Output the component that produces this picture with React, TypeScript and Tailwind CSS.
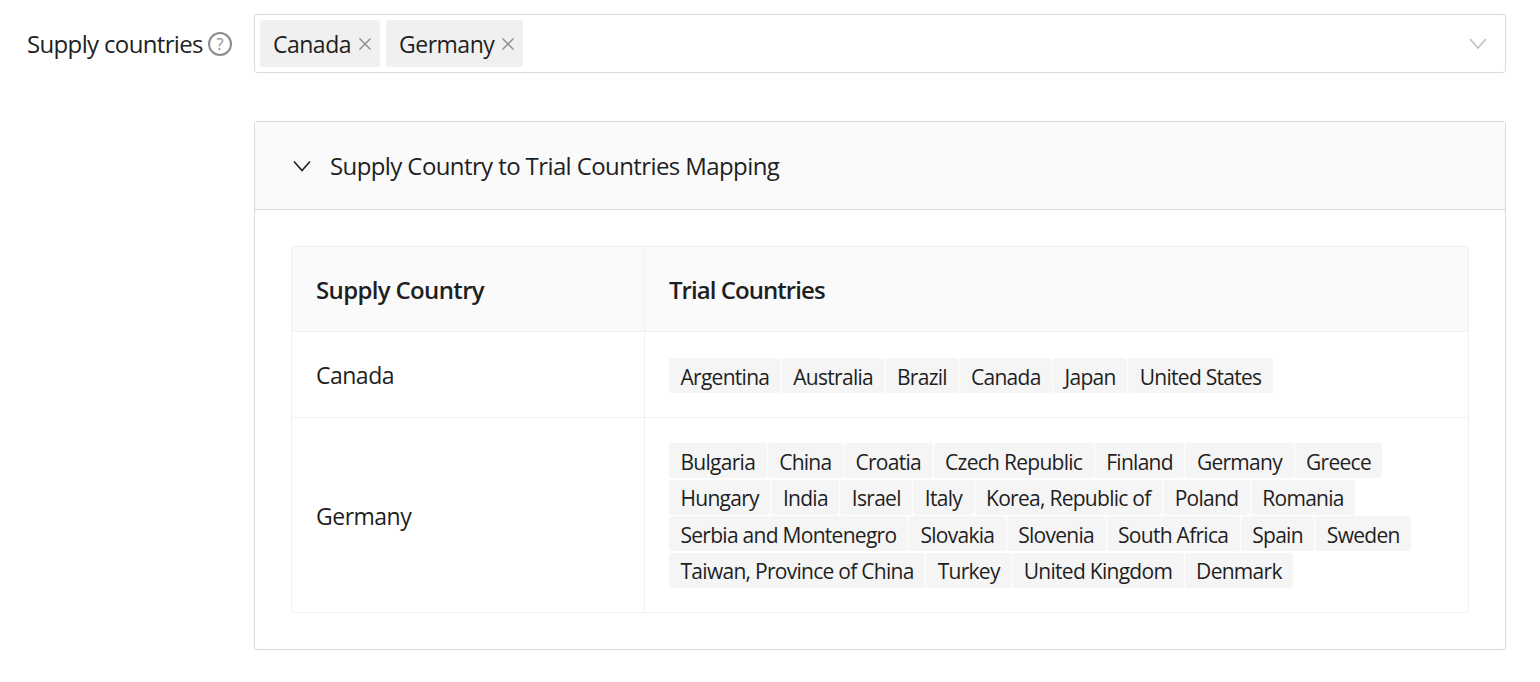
const font = "font-['Open_Sans','Noto_Sans',sans-serif]";

const mapping = [
  {
    supply: "Canada",
    trial: ["Argentina", "Australia", "Brazil", "Canada", "Japan", "United States"],
  },
  {
    supply: "Germany",
    trial: [
      "Bulgaria", "China", "Croatia", "Czech Republic", "Finland", "Germany", "Greece",
      "Hungary", "India", "Israel", "Italy", "Korea, Republic of", "Poland", "Romania",
      "Serbia and Montenegro", "Slovakia", "Slovenia", "South Africa", "Spain", "Sweden",
      "Taiwan, Province of China", "Turkey", "United Kingdom", "Denmark",
    ],
  },
];

function Chevron({ className }: { className: string }) {
  return (
    <svg viewBox="0 0 18 12" fill="none" stroke="currentColor" strokeWidth="1.6" className={className}>
      <path d="M1 1.5 9 10.5 17 1.5" />
    </svg>
  );
}

function SelectTag({ label }: { label: string }) {
  return (
    <span className="flex h-[47px] items-center rounded-[3px] bg-[#f0f0f0] pl-[13px] pr-[9px] text-[23px] tracking-[-0.5px]">
      <span className="pt-[2px]">{label}</span>
      <svg viewBox="0 0 12 12" fill="none" stroke="currentColor" strokeWidth="1.4" className="ml-[8px] h-[12px] w-[12px] text-[#8c8c8c]">
        <path d="M.5.5l11 11M11.5.5l-11 11" />
      </svg>
    </span>
  );
}

function TrialTag({ label }: { label: string }) {
  return (
    <span className="mr-px flex h-[35px] items-center rounded-[3px] bg-[#f5f5f5] px-[11.5px] pt-[4px] text-[21px] tracking-[-0.72px]">
      {label}
    </span>
  );
}

export default function App() {
  return (
    <div className={`min-h-screen bg-white pt-[14px] pl-[27px] pr-[34px] text-[#1f1f1f] ${font}`}>
      <div className="flex">
        <div className="flex h-[59px] w-[227px] shrink-0 items-center text-[24px] tracking-[-0.65px]">
          Supply countries
          <span className="ml-[5px] flex h-[24px] w-[24px] items-center justify-center rounded-full border-2 border-[#8c8c8c] text-[16px] font-medium tracking-normal text-[#8c8c8c]">
            ?
          </span>
        </div>
        <div className="flex h-[59px] flex-1 items-center gap-[6px] rounded-[3px] border border-[#d9d9d9] pl-[5px] pr-[18px]">
          <SelectTag label="Canada" />
          <SelectTag label="Germany" />
          <Chevron className="ml-auto h-[13px] w-[18px] text-[#bfbfbf]" />
        </div>
      </div>

      <div className="mt-[48px] ml-[227px] rounded-[3px] border border-[#d9d9d9]">
        <div className="flex h-[88px] items-center border-b border-[#d9d9d9] bg-[#fafafa] pl-[38px] text-[24px] tracking-[-0.6px]">
          <Chevron className="h-[12px] w-[18px] text-[#1f1f1f]" />
          <span className="ml-[19px]">Supply Country to Trial Countries Mapping</span>
        </div>
        <div className="p-[36px]">
          <div className="rounded-[3px] border border-[#f0f0f0]">
            <div className="flex h-[85px] border-b border-[#f0f0f0] bg-[#fafafa] pt-[2px] text-[24px] font-semibold">
              <div className="flex w-[353px] items-center border-r border-[#f0f0f0] pl-[24px] tracking-[-0.65px]">Supply Country</div>
              <div className="flex flex-1 items-center pl-[24px] tracking-[-0.95px]">Trial Countries</div>
            </div>
            {mapping.map((row, i) => (
              <div key={row.supply} className={`flex ${i === 0 ? "border-b border-[#f0f0f0]" : ""}`}>
                <div className="flex w-[353px] items-center border-r border-[#f0f0f0] pl-[24px] pt-[2px] text-[23px] tracking-[-0.5px]">
                  {row.supply}
                </div>
                <div className={`flex flex-1 flex-wrap gap-y-[1.5px] pb-[24px] pl-[24px] pr-[24px] ${i === 0 ? "pt-[26px]" : "pt-[25px]"}`}>
                  {row.trial.map((t) => (
                    <TrialTag key={t} label={t} />
                  ))}
                </div>
              </div>
            ))}
          </div>
        </div>
      </div>
    </div>
  );
}
